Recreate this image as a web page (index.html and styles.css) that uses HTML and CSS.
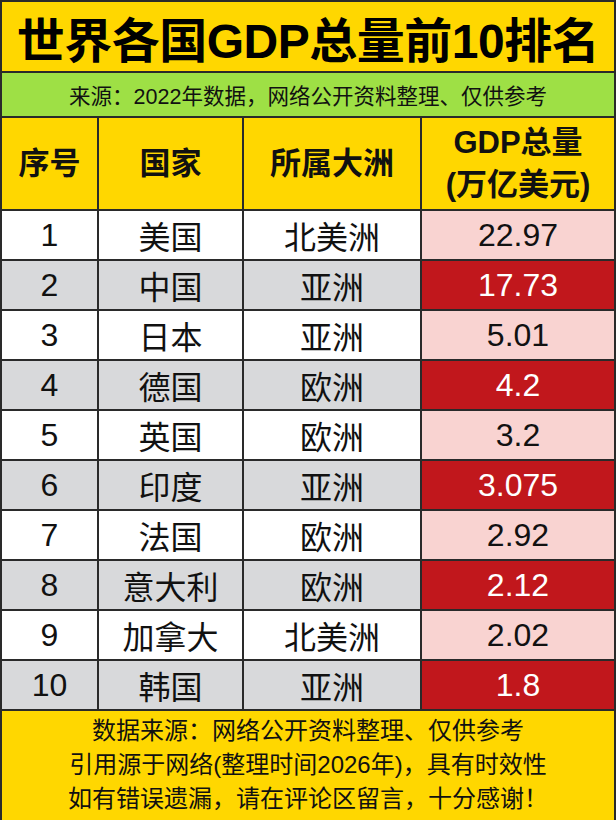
FILE: index.html
```html
<!DOCTYPE html>
<html lang="zh-CN">
<head>
<meta charset="utf-8">
<title>世界各国GDP总量前10排名</title>
<link rel="stylesheet" href="styles.css">
</head>
<body>
<div class="page">
  <div class="title">世界各国GDP总量前10排名</div>
  <div class="sub">来源：2022年数据，网络公开资料整理、仅供参考</div>
  <div class="table">
    <div class="cell head">序号</div>
    <div class="cell head">国家</div>
    <div class="cell head">所属大洲</div>
    <div class="cell head two">GDP总量<br>(万亿美元)</div>

    <div class="cell">1</div><div class="cell">美国</div><div class="cell">北美洲</div><div class="cell v">22.97</div>
    <div class="cell g">2</div><div class="cell g">中国</div><div class="cell g">亚洲</div><div class="cell r">17.73</div>
    <div class="cell">3</div><div class="cell">日本</div><div class="cell">亚洲</div><div class="cell v">5.01</div>
    <div class="cell g">4</div><div class="cell g">德国</div><div class="cell g">欧洲</div><div class="cell r">4.2</div>
    <div class="cell">5</div><div class="cell">英国</div><div class="cell">欧洲</div><div class="cell v">3.2</div>
    <div class="cell g">6</div><div class="cell g">印度</div><div class="cell g">亚洲</div><div class="cell r">3.075</div>
    <div class="cell">7</div><div class="cell">法国</div><div class="cell">欧洲</div><div class="cell v">2.92</div>
    <div class="cell g">8</div><div class="cell g">意大利</div><div class="cell g">欧洲</div><div class="cell r">2.12</div>
    <div class="cell">9</div><div class="cell">加拿大</div><div class="cell">北美洲</div><div class="cell v">2.02</div>
    <div class="cell g">10</div><div class="cell g">韩国</div><div class="cell g">亚洲</div><div class="cell r">1.8</div>
  </div>
  <div class="foot">
    <div>数据来源：网络公开资料整理、仅供参考</div>
    <div>引用源于网络(整理时间2026年)，具有时效性</div>
    <div>如有错误遗漏，请在评论区留言，十分感谢！</div>
  </div>
</div>
</body>
</html>
```

FILE: styles.css
```css
html, body {
  margin: 0;
  padding: 0;
  background: #2a2a2a;
}
body {
  font-family: "Liberation Sans", "Noto Sans CJK SC", sans-serif;
  color: #111;
}
.page {
  width: 616px;
  height: 820px;
  box-sizing: border-box;
  padding: 2px 2px 0;
  background: #2a2a2a;
  display: flex;
  flex-direction: column;
  gap: 2px;
}
.title {
  height: 69px;
  background: #ffd700;
  font-size: 48px;
  font-weight: 700;
  display: flex;
  align-items: center;
  justify-content: center;
  letter-spacing: -0.5px;
  color: #000;
}
.sub {
  height: 43px;
  background: #9ee045;
  font-size: 21.5px;
  display: flex;
  align-items: center;
  justify-content: center;
}
.table {
  display: grid;
  grid-template-columns: 95px 143px 176px 192px;
  grid-template-rows: 91px repeat(10, 48px);
  gap: 2px;
}
.cell {
  background: #fff;
  display: flex;
  align-items: center;
  justify-content: center;
  font-size: 32px;
  text-align: center;
}
.head {
  background: #ffd700;
  font-weight: 700;
  font-size: 31px;
  line-height: 42px;
}
.g { background: #d8d9db; }
.v { background: #f9d3d1; }
.r { background: #c1171c; color: #fff; }
.foot {
  flex: 1;
  background: #ffd700;
  font-size: 24px;
  display: flex;
  flex-direction: column;
  align-items: center;
  justify-content: center;
  line-height: 34px;
  padding-bottom: 2px;
}
```
